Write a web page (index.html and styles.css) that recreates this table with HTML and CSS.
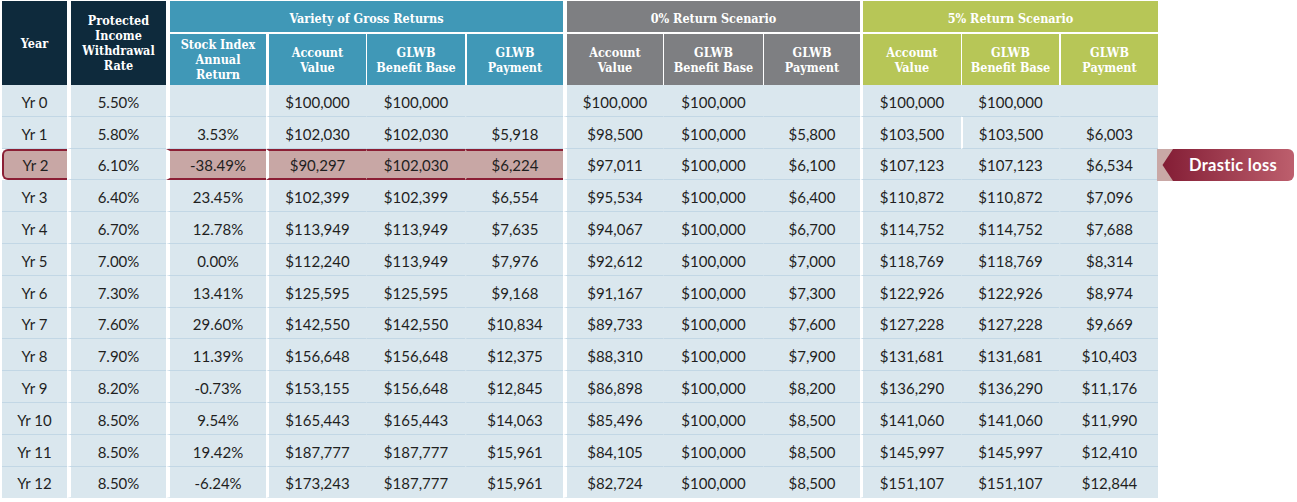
FILE: index.html
```html
<!DOCTYPE html>
<html lang="en">
<head>
<meta charset="utf-8">
<title>GLWB Scenarios</title>
<link rel="stylesheet" href="styles.css">
</head>
<body>
<div class="wrap">
  <div class="head">
    <div class="h navy year">Year</div>
    <div class="h navy rate">Protected<br>Income<br>Withdrawal<br>Rate</div>
    <div class="h teal grp g1">Variety of Gross Returns</div>
    <div class="h gray grp g2">0% Return Scenario</div>
    <div class="h green grp g3">5% Return Scenario</div>
    <div class="h teal sub s3">Stock Index<br>Annual<br>Return</div>
    <div class="h teal sub s4">Account<br>Value</div>
    <div class="h teal sub s5">GLWB<br>Benefit Base</div>
    <div class="h teal sub s6">GLWB<br>Payment</div>
    <div class="h gray sub s7">Account<br>Value</div>
    <div class="h gray sub s8">GLWB<br>Benefit Base</div>
    <div class="h gray sub s9">GLWB<br>Payment</div>
    <div class="h green sub s10">Account<br>Value</div>
    <div class="h green sub s11">GLWB<br>Benefit Base</div>
    <div class="h green sub s12">GLWB<br>Payment</div>
  </div>
  <div class="body">
    <div class="row"><div>Yr 0</div><div>5.50%</div><div></div><div>$100,000</div><div>$100,000</div><div></div><div>$100,000</div><div>$100,000</div><div></div><div>$100,000</div><div>$100,000</div><div></div></div>
    <div class="row r1"><div>Yr 1</div><div>5.80%</div><div>3.53%</div><div>$102,030</div><div>$102,030</div><div>$5,918</div><div>$98,500</div><div>$100,000</div><div>$5,800</div><div>$103,500</div><div>$103,500</div><div>$6,003</div></div>
    <div class="row hl"><div>Yr 2</div><div>6.10%</div><div>-38.49%</div><div>$90,297</div><div>$102,030</div><div>$6,224</div><div>$97,011</div><div>$100,000</div><div>$6,100</div><div>$107,123</div><div>$107,123</div><div>$6,534</div></div>
    <div class="row"><div>Yr 3</div><div>6.40%</div><div>23.45%</div><div>$102,399</div><div>$102,399</div><div>$6,554</div><div>$95,534</div><div>$100,000</div><div>$6,400</div><div>$110,872</div><div>$110,872</div><div>$7,096</div></div>
    <div class="row"><div>Yr 4</div><div>6.70%</div><div>12.78%</div><div>$113,949</div><div>$113,949</div><div>$7,635</div><div>$94,067</div><div>$100,000</div><div>$6,700</div><div>$114,752</div><div>$114,752</div><div>$7,688</div></div>
    <div class="row"><div>Yr 5</div><div>7.00%</div><div>0.00%</div><div>$112,240</div><div>$113,949</div><div>$7,976</div><div>$92,612</div><div>$100,000</div><div>$7,000</div><div>$118,769</div><div>$118,769</div><div>$8,314</div></div>
    <div class="row"><div>Yr 6</div><div>7.30%</div><div>13.41%</div><div>$125,595</div><div>$125,595</div><div>$9,168</div><div>$91,167</div><div>$100,000</div><div>$7,300</div><div>$122,926</div><div>$122,926</div><div>$8,974</div></div>
    <div class="row"><div>Yr 7</div><div>7.60%</div><div>29.60%</div><div>$142,550</div><div>$142,550</div><div>$10,834</div><div>$89,733</div><div>$100,000</div><div>$7,600</div><div>$127,228</div><div>$127,228</div><div>$9,669</div></div>
    <div class="row"><div>Yr 8</div><div>7.90%</div><div>11.39%</div><div>$156,648</div><div>$156,648</div><div>$12,375</div><div>$88,310</div><div>$100,000</div><div>$7,900</div><div>$131,681</div><div>$131,681</div><div>$10,403</div></div>
    <div class="row"><div>Yr 9</div><div>8.20%</div><div>-0.73%</div><div>$153,155</div><div>$156,648</div><div>$12,845</div><div>$86,898</div><div>$100,000</div><div>$8,200</div><div>$136,290</div><div>$136,290</div><div>$11,176</div></div>
    <div class="row"><div>Yr 10</div><div>8.50%</div><div>9.54%</div><div>$165,443</div><div>$165,443</div><div>$14,063</div><div>$85,496</div><div>$100,000</div><div>$8,500</div><div>$141,060</div><div>$141,060</div><div>$11,990</div></div>
    <div class="row"><div>Yr 11</div><div>8.50%</div><div>19.42%</div><div>$187,777</div><div>$187,777</div><div>$15,961</div><div>$84,105</div><div>$100,000</div><div>$8,500</div><div>$145,997</div><div>$145,997</div><div>$12,410</div></div>
    <div class="row last"><div>Yr 12</div><div>8.50%</div><div>-6.24%</div><div>$173,243</div><div>$187,777</div><div>$15,961</div><div>$82,724</div><div>$100,000</div><div>$8,500</div><div>$151,107</div><div>$151,107</div><div>$12,844</div></div>
  </div>
  <div class="tag">
    <svg class="tag-bg" width="138" height="32" viewBox="0 0 138 32" aria-hidden="true">
      <defs>
        <linearGradient id="tg" x1="0" y1="0" x2="1" y2="0">
          <stop offset="0" stop-color="#831d35"/>
          <stop offset="1" stop-color="#bd5f6d"/>
        </linearGradient>
      </defs>
      <rect x="0" y="0" width="18" height="32" fill="#c9a8a6"/>
      <path d="M16 0 H131 A6 6 0 0 1 137 6 V26 A6 6 0 0 1 131 32 H16 L5.5 16 Z" fill="url(#tg)"/>
    </svg>
    <span class="tag-text">Drastic loss</span>
  </div>
</div>
</body>
</html>
```

FILE: styles.css
```css
html, body {
  margin: 0;
  padding: 0;
  background: #ffffff;
}

.wrap {
  position: relative;
  padding: 1px 0 0 2px;
  width: 1295px;
  height: 501px;
}

.head,
.row {
  display: grid;
  grid-template-columns: 65px 99px 100px 100px 99px 98px 100px 100px 97px 101px 98px 99px;
  width: 1156px;
}

.head {
  grid-template-rows: 31px 53px;
}

.h {
  box-sizing: border-box;
  display: flex;
  align-items: center;
  justify-content: center;
  text-align: center;
  color: #ffffff;
  font-family: "DejaVu Serif", serif;
  font-stretch: condensed;
  font-weight: bold;
  font-size: 12.5px;
  line-height: 15px;
  border-left: 0 solid #ffffff;
}

.navy { background: #0e2a3c; }
.teal { background: #4098b7; }
.gray { background: #7e7f82; }
.green { background: #b7c657; }

.year { grid-column: 1; grid-row: 1 / 3; }
.rate { grid-column: 2; grid-row: 1 / 3; border-left-width: 4px; }

.grp { grid-row: 1; padding-top: 4px; }
.g1 { grid-column: 3 / 7; border-left-width: 4px; }
.g2 { grid-column: 7 / 10; border-left-width: 4px; }
.g3 { grid-column: 10 / 13; border-left-width: 3px; }

.sub { grid-row: 2; border-top: 2px solid #ffffff; }
.s3 { grid-column: 3; border-left-width: 4px; }
.s4 { grid-column: 4; border-left-width: 3px; }
.s5 { grid-column: 5; border-left-width: 1px; }
.s6 { grid-column: 6; border-left-width: 2px; }
.s7 { grid-column: 7; border-left-width: 4px; }
.s8 { grid-column: 8; border-left-width: 1px; }
.s9 { grid-column: 9; border-left-width: 1px; }
.s10 { grid-column: 10; border-left-width: 3px; }
.s11 { grid-column: 11; border-left-width: 1px; }
.s12 { grid-column: 12; border-left-width: 2px; }

.row {
  height: 31.8px;
}

.row > div {
  box-sizing: border-box;
  display: flex;
  align-items: center;
  justify-content: center;
  background: #dae7ee;
  border-left: 0 solid transparent;
  border-bottom: 1px solid #c2d7e5;
  font-family: "Lato", "Liberation Sans", sans-serif;
  font-size: 15px;
  color: #1f1f1f;
  padding-top: 3px;
}

.row.last > div { border-bottom-color: #dae7ee; padding-top: 2px; }

.row > div:nth-child(2),
.row > div:nth-child(3),
.row > div:nth-child(7) { border-left: 4px solid #ffffff; }
.row > div:nth-child(4),
.row > div:nth-child(10) { border-left: 3px solid #ffffff; }
.row > div:nth-child(5),
.row > div:nth-child(8),
.row > div:nth-child(9),
.row > div:nth-child(11) { border-left-width: 1px; }
.row > div:nth-child(6),
.row > div:nth-child(12) { border-left-width: 2px; }

.r1 > div:nth-child(11) { border-left: 2px solid #ffffff; }

.hl > div:nth-child(1),
.hl > div:nth-child(3),
.hl > div:nth-child(4),
.hl > div:nth-child(5),
.hl > div:nth-child(6) {
  background: #c8a7a5;
  border-top: 2px solid #8b1f35;
  border-bottom: 2px solid #8b1f35;
  padding-top: 1px;
}

.hl > div:nth-child(1) {
  border-left: 2px solid #8b1f35;
  border-radius: 6px 0 0 6px;
}

.hl > div:nth-child(4) { border-left-color: #ffffff; }

.tag {
  position: absolute;
  left: 1157px;
  top: 149px;
  width: 138px;
  height: 32px;
}

.tag-bg {
  position: absolute;
  left: 0;
  top: 0;
  display: block;
}

.tag-text {
  position: absolute;
  left: 16px;
  right: 2px;
  top: 0;
  bottom: 0;
  display: flex;
  align-items: center;
  justify-content: center;
  color: #ffffff;
  font-family: "Lato", "Liberation Sans", sans-serif;
  font-weight: bold;
  font-size: 16.5px;
  letter-spacing: 0.3px;
}
```
